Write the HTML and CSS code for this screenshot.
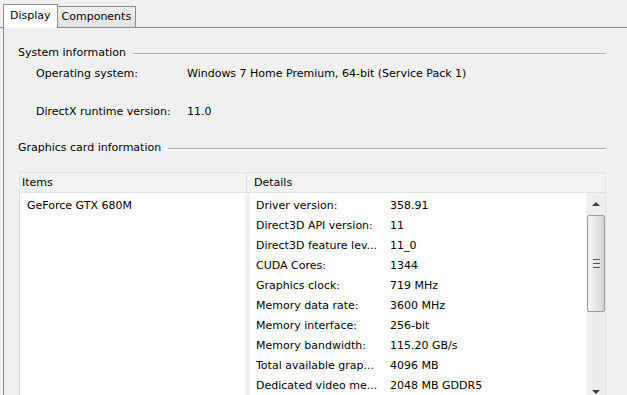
FILE: index.html
```html
<!DOCTYPE html>
<html lang="en">
<head>
    <meta charset="UTF-8">
    <title>Display</title>
    <link rel="stylesheet" href="styles.css">
</head>
<body>

<div class="tabs">
    <div class="tab active">Display</div>
    <div class="tab">Components</div>
</div>

<div class="panel">
    <div class="group-title"><span>System information</span><div class="rule"></div></div>
    <div class="info-row os"><span class="info-label">Operating system:</span><span>Windows 7 Home Premium, 64-bit (Service Pack 1)</span></div>
    <div class="info-row dx"><span class="info-label">DirectX runtime version:</span><span>11.0</span></div>

    <div class="group-title gpu"><span>Graphics card information</span><div class="rule"></div></div>

    <div class="list">
        <div class="list-head">
            <div class="col-items">Items</div>
            <div class="col-details">Details</div>
        </div>
        <div class="list-body">
            <div class="items">
                <div class="item">GeForce GTX 680M</div>
            </div>
            <div class="details">
                <div class="detail-rows">
                    <div class="detail"><span class="d-label">Driver version:</span><span>358.91</span></div>
                    <div class="detail"><span class="d-label">Direct3D API version:</span><span>11</span></div>
                    <div class="detail"><span class="d-label">Direct3D feature lev...</span><span>11_0</span></div>
                    <div class="detail"><span class="d-label">CUDA Cores:</span><span>1344</span></div>
                    <div class="detail"><span class="d-label">Graphics clock:</span><span>719 MHz</span></div>
                    <div class="detail"><span class="d-label">Memory data rate:</span><span>3600 MHz</span></div>
                    <div class="detail"><span class="d-label">Memory interface:</span><span>256-bit</span></div>
                    <div class="detail"><span class="d-label">Memory bandwidth:</span><span>115.20 GB/s</span></div>
                    <div class="detail"><span class="d-label">Total available grap...</span><span>4096 MB</span></div>
                    <div class="detail"><span class="d-label">Dedicated video me...</span><span>2048 MB GDDR5</span></div>
                </div>
                <div class="scrollbar">
                    <div class="arrow up"></div>
                    <div class="thumb"><span></span><span></span><span></span></div>
                    <div class="track"></div>
                    <div class="arrow down"></div>
                </div>
            </div>
        </div>
    </div>
</div>

</body>
</html>
```

FILE: styles.css
```css
* { box-sizing: border-box; }
html, body { overflow: hidden; }
body { margin: 0; background: #f0f0f0; font-family: "DejaVu Sans", Tahoma, sans-serif; font-size: 11px; color: #000; height: 395px; }

.tabs { display: flex; align-items: flex-end; height: 28px; padding-left: 3px; border-bottom: 1px solid #898c95; }
.tab { height: 21px; line-height: 19px; padding: 0 4px; border: 1px solid #898c95; border-bottom: none; background: linear-gradient(#f0f0f0, #e1e1e1); margin-left: -1px; }
.tab.active { height: 24px; line-height: 22px; padding: 0 6px; background: #fff; margin-bottom: -1px; margin-left: 0; position: relative; z-index: 1; }

.panel { margin-left: 3px; border-left: 1px solid #898c95; padding: 18px 0 0 14px; height: 367px; }

.group-title { display: flex; align-items: center; height: 14px; line-height: 14px; width: 588px; }
.group-title .rule { flex: 1; height: 2px; border-top: 1px solid #a9a9a9; border-bottom: 1px solid #fff; margin-left: 7px; margin-top: 1px; }
.group-title.gpu { margin-top: 22px; }

.info-row { display: flex; height: 14px; line-height: 14px; padding-left: 18px; }
.info-row.os { margin-top: 7px; }
.info-row.dx { margin-top: 24px; }
.info-label { width: 151px; }

.list { margin-top: 17px; margin-left: 1px; width: 587px; }
.list-head { display: flex; height: 21px; line-height: 19px; background: #f2f2f2; border: 1px solid #dde3e8; border-radius: 0 3px 0 0; }
.col-items { width: 227px; padding-left: 2px; border-right: 1px solid #e2e2e2; }
.col-details { flex: 1; padding-left: 7px; }

.list-body { display: flex; height: 210px; }
.items { width: 226px; background: #fff; border-left: 1px solid #dcdcdc; padding: 3px 0 0 7px; }
.item { height: 20px; line-height: 20px; }
.details { flex: 1; display: flex; margin-left: 5px; background: #fff; border-right: 1px solid #dde3e8; }
.detail-rows { flex: 1; padding: 3px 0 0 6px; }
.detail { display: flex; height: 20px; line-height: 20px; white-space: nowrap; }
.d-label { width: 134px; overflow: hidden; }

.scrollbar { width: 19px; display: flex; flex-direction: column; background: #eeeeee; border-left: 1px solid #f4f4f4; }
.arrow { height: 22px; display: flex; align-items: center; justify-content: center; }
.arrow.up::before { content: ""; border-left: 4px solid transparent; border-right: 4px solid transparent; border-bottom: 4px solid #3c3c3c; }
.arrow.down::before { content: ""; border-left: 4px solid transparent; border-right: 4px solid transparent; border-top: 4px solid #3c3c3c; }
.thumb { height: 97px; border: 1px solid #9a9a9a; border-radius: 2px; background: linear-gradient(to right, #f6f6f6, #e8e8e8 45%, #d3d3d3); display: flex; flex-direction: column; align-items: center; justify-content: center; gap: 2px; }
.thumb span { width: 7px; height: 2px; border-top: 1px solid #555; border-bottom: 1px solid #eee; }
.track { flex: 1; }
```
